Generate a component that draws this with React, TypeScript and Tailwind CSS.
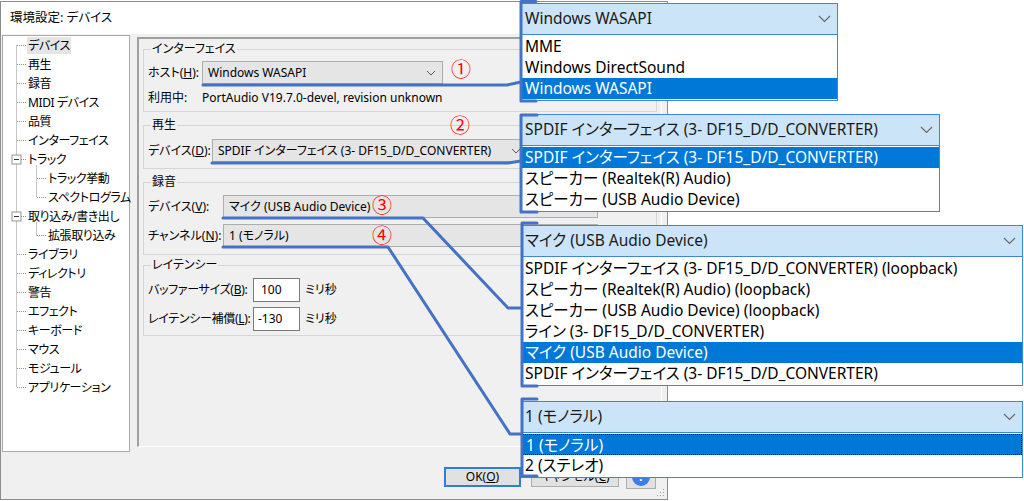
import React from "react";

const FONT =
  "font-['Noto_Sans','Noto_Sans_CJK_JP',sans-serif] [font-feature-settings:'palt']";

type TreeItem = { t: string; l: 1 | 2; sel?: boolean; box?: boolean };

const treeItems: TreeItem[] = [
  { t: "デバイス", l: 1, sel: true },
  { t: "再生", l: 1 },
  { t: "録音", l: 1 },
  { t: "MIDI デバイス", l: 1 },
  { t: "品質", l: 1 },
  { t: "インターフェイス", l: 1 },
  { t: "トラック", l: 1, box: true },
  { t: "トラック挙動", l: 2 },
  { t: "スペクトログラム", l: 2 },
  { t: "取り込み/書き出し", l: 1, box: true },
  { t: "拡張取り込み", l: 2 },
  { t: "ライブラリ", l: 1 },
  { t: "ディレクトリ", l: 1 },
  { t: "警告", l: 1 },
  { t: "エフェクト", l: 1 },
  { t: "キーボード", l: 1 },
  { t: "マウス", l: 1 },
  { t: "モジュール", l: 1 },
  { t: "アプリケーション", l: 1 },
];

const Chevron = ({ big = false }: { big?: boolean }) =>
  big ? (
    <svg width="13" height="8" viewBox="0 0 13 8">
      <polyline points="1,1 6.5,6.5 12,1" fill="none" stroke="#6b6b6b" strokeWidth="1.2" />
    </svg>
  ) : (
    <svg width="10" height="6" viewBox="0 0 10 6">
      <polyline points="1,1 5,5 9,1" fill="none" stroke="#5a5a5a" strokeWidth="1" />
    </svg>
  );

const Combo = ({ text, className }: { text: string; className: string }) => (
  <div
    className={`h-[23px] bg-[#e5e5e5] border border-[#adadad] flex items-center justify-between pl-[5px] pr-[6px] ${className}`}
  >
    <span className="whitespace-nowrap">{text}</span>
    <Chevron />
  </div>
);

const Group = ({
  label,
  className,
  children,
}: {
  label: string;
  className: string;
  children: React.ReactNode;
}) => (
  <div className={`relative border border-[#d5d5d5] pl-[4px] ${className}`}>
    <span className="absolute -top-[9px] left-[7px] px-[1px] bg-[#f0f0f0] leading-[16px]">
      {label}
    </span>
    {children}
  </div>
);

const Tree = () => {
  const c = (i: number) => i * 19 + 9.5;
  return (
    <div className="relative ml-[1px] mt-[1px] w-[128px] h-[417px] bg-white border border-[#a9a9a9] tracking-[-0.4px]">
      <svg className="absolute left-0 top-0" width="126" height="415">
        <g stroke="#8f8f8f" strokeDasharray="1 1" fill="none">
          <line x1="13.5" y1={c(0)} x2="13.5" y2={c(18)} />
          {treeItems.map((it, i) =>
            it.l === 1 ? (
              <line key={i} x1={it.box ? 18 : 14} y1={c(i)} x2="24" y2={c(i)} />
            ) : (
              <line key={i} x1="34" y1={c(i)} x2="44" y2={c(i)} />
            ),
          )}
          <line x1="33.5" y1={c(6) + 6} x2="33.5" y2={c(8)} />
          <line x1="33.5" y1={c(9) + 6} x2="33.5" y2={c(10)} />
        </g>
        {[6, 9].map((i) => (
          <g key={i}>
            <rect x="9" y={c(i) - 4.5} width="9" height="9" fill="#fff" stroke="#919191" />
            <line x1="11" y1={c(i)} x2="16" y2={c(i)} stroke="#333" />
          </g>
        ))}
      </svg>
      {treeItems.map((it, i) => (
        <div
          key={i}
          className={`relative h-[19px] flex items-center whitespace-nowrap ${it.l === 1 ? "pl-[24px]" : "pl-[44px]"}`}
        >
          <span className={it.sel ? "bg-[#e5e5e5] px-[1px] leading-[17px]" : "px-[1px]"}>
            {it.t}
          </span>
        </div>
      ))}
    </div>
  );
};

const Dropdown = ({
  className,
  value,
  items,
  selected,
  focus = false,
}: {
  className: string;
  value: string;
  items: string[];
  selected: number;
  focus?: boolean;
}) => (
  <div className={`absolute z-10 bg-white border border-[#3f86d6] text-[15.5px] ${className}`}>
    <div className="h-[31px] bg-[#cce4f7] border-b border-[#3f86d6] flex items-center justify-between pl-[3px] pr-[6px] text-[#1a1a1a]">
      <span className="whitespace-nowrap">{value}</span>
      <Chevron big />
    </div>
    <div className="py-[1px]">
      {items.map((t, i) => (
        <div
          key={i}
          className={`h-[21px] leading-[21px] pl-[3px] whitespace-nowrap ${
            i === selected
              ? focus
                ? "bg-[#0078d7] text-white border border-dotted border-[#1b1b1b]"
                : "bg-[#0078d7] text-white"
              : "text-black"
          }`}
        >
          {t}
        </div>
      ))}
    </div>
  </div>
);

export default function App() {
  return (
    <div className={`relative w-[1024px] h-[501px] bg-white overflow-hidden text-[12px] text-black ${FONT}`}>
      {/* dialog */}
      <div className="relative mt-[1px] w-[668px] h-[499px] border border-[#8d8d8d] bg-[#f0f0f0] flex flex-col">
        <div className="h-[32px] bg-white flex items-center px-[9px] text-[12.5px]">環境設定: デバイス</div>
        <div className="flex">
          <Tree />
          <div className="flex-1 ml-[7px] mt-[3px] mr-[5px] h-[410px] border-l-2 border-t-2 border-[#a0a0a0] border-b border-r border-b-white border-r-white pl-[4px] pr-[4px] pt-[10px]">
            <Group label="インターフェイス" className="pt-[11px] pb-[5px]">
              <div className="flex items-center h-[23px]">
                <span className="w-[54px] whitespace-nowrap">
                  ホスト(<span className="underline">H</span>):
                </span>
                <Combo className="w-[241px]" text="Windows WASAPI" />
              </div>
              <div className="flex items-center h-[16px] mt-[6px]">
                <span className="w-[54px]">利用中:</span>
                <span className="whitespace-nowrap">PortAudio V19.7.0-devel, revision unknown</span>
              </div>
            </Group>
            <Group label="再生" className="mt-[13px] pt-[13px] pb-[6px]">
              <div className="flex items-center h-[23px]">
                <span className="w-[64px] whitespace-nowrap">
                  デバイス(<span className="underline">D</span>):
                </span>
                <Combo className="w-[316px]" text="SPDIF インターフェイス (3- DF15_D/D_CONVERTER)" />
              </div>
            </Group>
            <Group label="録音" className="mt-[13px] pt-[12px] pb-[7px]">
              <div className="flex items-center h-[23px]">
                <span className="w-[75px] whitespace-nowrap">
                  デバイス(<span className="underline">V</span>):
                </span>
                <Combo className="w-[375px]" text="マイク (USB Audio Device)" />
              </div>
              <div className="flex items-center h-[23px] mt-[6px]">
                <span className="w-[75px] whitespace-nowrap">
                  チャンネル(<span className="underline">N</span>):
                </span>
                <Combo className="w-[375px]" text="1 (モノラル)" />
              </div>
            </Group>
            <Group label="レイテンシー" className="mt-[10px] pt-[12px] pb-[4px]">
              <div className="flex items-center h-[24px]">
                <span className="w-[105px] whitespace-nowrap tracking-[-0.3px]">
                  バッファーサイズ(<span className="underline">B</span>):
                </span>
                <div className="w-[47px] h-[24px] bg-white border border-[#7a7a7a] flex items-center pl-[7px]">100</div>
                <span className="ml-[5px]">ミリ秒</span>
              </div>
              <div className="flex items-center h-[24px] mt-[5px]">
                <span className="w-[105px] whitespace-nowrap tracking-[-0.3px]">
                  レイテンシー補償(<span className="underline">L</span>):
                </span>
                <div className="w-[47px] h-[24px] bg-white border border-[#7a7a7a] flex items-center pl-[4px]">-130</div>
                <span className="ml-[5px]">ミリ秒</span>
              </div>
            </Group>
          </div>
        </div>
        <div className="flex justify-end items-center pr-[11px] mt-[12px]">
          <div className="w-[77px] h-[20px] border-2 border-[#2b7fd8] bg-[#e1e1e1] flex items-center justify-center">
            OK(<span className="underline">O</span>)
          </div>
          <div className="ml-[10px] w-[88px] h-[21px] border border-[#adadad] bg-[#e1e1e1] flex items-center justify-center">
            キャンセル(<span className="underline">C</span>)
          </div>
          <div className="ml-[7px] w-[30px] h-[25px] border border-[#adadad] bg-[#e1e1e1] flex items-center justify-center">
            <div className="w-[18px] h-[18px] rounded-full bg-[#3a7ee6] text-white text-[12px] font-bold flex items-center justify-center">?</div>
          </div>
        </div>
        <svg className="absolute right-[2px] bottom-[2px]" width="8" height="8">
          <g fill="#a0a0a0">
            <rect x="6" y="0" width="1" height="1" />
            <rect x="3" y="3" width="1" height="1" />
            <rect x="6" y="3" width="1" height="1" />
            <rect x="0" y="6" width="1" height="1" />
            <rect x="3" y="6" width="1" height="1" />
            <rect x="6" y="6" width="1" height="1" />
          </g>
        </svg>
      </div>

      {/* dropdown call-outs */}
      <Dropdown
        className="left-[521px] top-[3px] w-[317px]"
        value="Windows WASAPI"
        items={["MME", "Windows DirectSound", "Windows WASAPI"]}
        selected={2}
      />
      <Dropdown
        className="left-[521px] top-[114px] w-[419px]"
        value="SPDIF インターフェイス (3- DF15_D/D_CONVERTER)"
        items={[
          "SPDIF インターフェイス (3- DF15_D/D_CONVERTER)",
          "スピーカー (Realtek(R) Audio)",
          "スピーカー (USB Audio Device)",
        ]}
        selected={0}
      />
      <Dropdown
        className="left-[521px] top-[225px] w-[502px]"
        value="マイク (USB Audio Device)"
        items={[
          "SPDIF インターフェイス (3- DF15_D/D_CONVERTER) (loopback)",
          "スピーカー (Realtek(R) Audio) (loopback)",
          "スピーカー (USB Audio Device) (loopback)",
          "ライン (3- DF15_D/D_CONVERTER)",
          "マイク (USB Audio Device)",
          "SPDIF インターフェイス (3- DF15_D/D_CONVERTER)",
        ]}
        selected={4}
      />
      <Dropdown
        className="left-[521px] top-[401px] w-[502px]"
        value="1 (モノラル)"
        items={["1 (モノラル)", "2 (ステレオ)"]}
        selected={0}
        focus
      />

      {/* red markers */}
      <span className="absolute z-20 left-[451px] top-[60px] text-[20px] leading-none text-[#ff0000]">①</span>
      <span className="absolute z-20 left-[450px] top-[116px] text-[20px] leading-none text-[#ff0000]">②</span>
      <span className="absolute z-20 left-[372px] top-[196px] text-[20px] leading-none text-[#ff0000]">③</span>
      <span className="absolute z-20 left-[372px] top-[226px] text-[20px] leading-none text-[#ff0000]">④</span>

      {/* connector lines */}
      <svg className="absolute left-0 top-0 z-20 pointer-events-none" width="1024" height="501">
        <g fill="none" stroke="#4472c4" strokeWidth="3" strokeLinejoin="round" strokeLinecap="round">
          <path d="M203 85 L507 85 L521 82" />
          <path d="M536 1.5 L521 1.5 L521 101 L536 101" />
          <path d="M212 163 L508 163 L521 161" />
          <path d="M537 115 L521 115 L521 212 L537 212" />
          <path d="M223 218 L423 218 L508 308 L521 308" />
          <path d="M537 223 L522 223 L522 386 L537 386" />
          <path d="M223 247 L388 247 L510 434 L521 434" />
          <path d="M537 399 L522 399 L522 476 L537 476" />
        </g>
      </svg>
    </div>
  );
}
